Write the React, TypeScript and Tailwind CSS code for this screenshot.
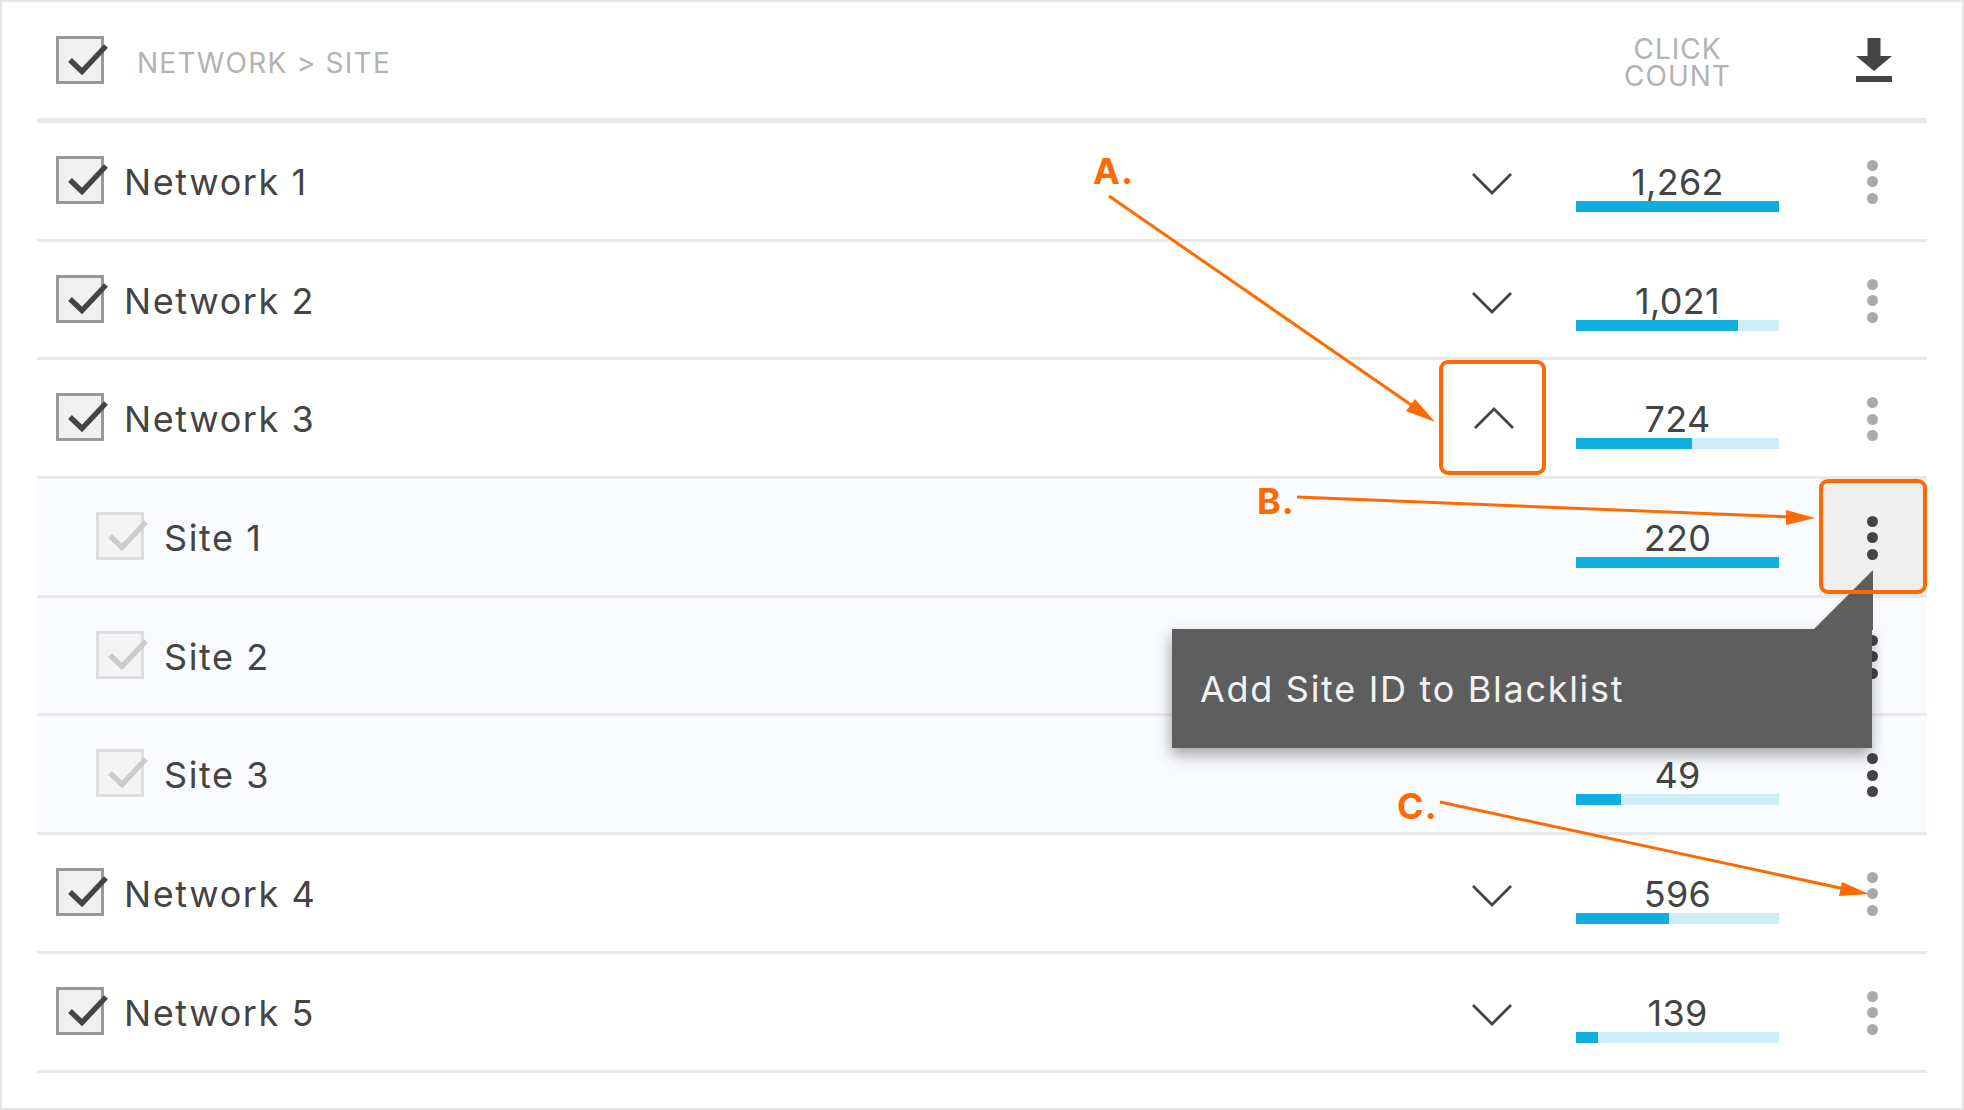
import React from 'react';

interface RowData {
  id: string;
  label: string;
  count: string | null;
  pct: number;
  site?: boolean;
  open?: boolean;
  active?: boolean;
}

const rows: RowData[] = [
  { id: 'n1', label: 'Network 1', count: '1,262', pct: 100 },
  { id: 'n2', label: 'Network 2', count: '1,021', pct: 80 },
  { id: 'n3', label: 'Network 3', count: '724', pct: 57, open: true },
  { id: 's1', label: 'Site 1', count: '220', pct: 100, site: true, active: true },
  { id: 's2', label: 'Site 2', count: null, pct: 40, site: true },
  { id: 's3', label: 'Site 3', count: '49', pct: 22, site: true },
  { id: 'n4', label: 'Network 4', count: '596', pct: 46 },
  { id: 'n5', label: 'Network 5', count: '139', pct: 11 },
];

function Checkbox({ muted = false }: { muted?: boolean }) {
  return (
    <div
      className={
        muted
          ? 'relative h-[48px] w-[48px] shrink-0 border-[3px] border-[#dedede] bg-[#f4f4f5]'
          : 'relative h-[48px] w-[48px] shrink-0 border-[3px] border-[#999999] bg-[#f0f0f0]'
      }
    >
      <svg className="absolute -left-[3px] -top-[3px] overflow-visible" width="48" height="48" viewBox="0 0 48 48" fill="none">
        <path d="M14 24 L26 35.5 L50 10" stroke={muted ? '#cccccc' : '#444444'} strokeWidth="5.4" />
      </svg>
    </div>
  );
}

function Chevron({ up = false }: { up?: boolean }) {
  return (
    <svg
      className={up ? 'ml-[4px]' : 'mt-[6px]'}
      width="40"
      height="22"
      viewBox="0 0 40 22"
      fill="none"
    >
      <path d={up ? 'M1 21 L20 2 L39 21' : 'M1 1 L20 20 L39 1'} stroke="#444444" strokeWidth="2.8" />
    </svg>
  );
}

function Dots({ dark = false }: { dark?: boolean }) {
  const dot = dark ? 'h-[11px] w-[11px] rounded-full bg-[#444444]' : 'h-[11px] w-[11px] rounded-full bg-[#aaaaaa]';
  return (
    <div className="flex flex-col gap-[5.5px] pt-[2px]">
      <div className={dot} />
      <div className={dot} />
      <div className={dot} />
    </div>
  );
}

function Row({ row }: { row: RowData }) {
  return (
    <div
      className={
        row.site
          ? 'flex h-[118.7px] items-center border-b-[3px] border-[#e9e9e9] bg-[#fafbff]'
          : 'flex h-[118.7px] items-center border-b-[3px] border-[#e9e9e9] bg-white'
      }
    >
      <div className={row.site ? 'mb-[2px] ml-[59px]' : 'mb-[2px] ml-[19px]'}>
        <Checkbox muted={row.site} />
      </div>
      <div className="ml-[20px] flex-1 pt-[2px] text-[36px] leading-none tracking-[1.6px] text-[#444444]">{row.label}</div>
      <div className="flex w-[106px] items-center justify-center">
        {!row.site && <Chevron up={row.open} />}
      </div>
      <div className="ml-[31px] flex h-full w-[203px] flex-col items-center pt-[41px]">
        <div className="h-[37px] text-[36px] leading-[36px] tracking-[0.3px] text-[#444444]">{row.count}</div>
        <div className="h-[11px] w-full bg-[#cdedf7]">
          <div className="h-full bg-[#10aede]" style={{ width: `${row.pct}%` }} />
        </div>
      </div>
      <div
        className={
          row.active
            ? 'ml-[40px] flex h-full w-[108px] items-center justify-center bg-[#efefef] pr-[1px]'
            : 'ml-[40px] flex h-full w-[108px] items-center justify-center pr-[1px]'
        }
      >
        <Dots dark={row.site} />
      </div>
    </div>
  );
}

function Annotations() {
  return (
    <svg className="pointer-events-none absolute left-0 top-0" width="1964" height="1110" viewBox="0 0 1964 1110" fill="none">
      {/* A */}
      <path d="M1109 196 L1420 411" stroke="#ff6a00" strokeWidth="3" />
      <path d="M1435 422 L1406 411 L1415 399 Z" fill="#ff6a00" />
      {/* B */}
      <path d="M1297 497 L1790 517" stroke="#ff6a00" strokeWidth="3" />
      <path d="M1815 518 L1786 525 L1786 510 Z" fill="#ff6a00" />
      {/* C */}
      <path d="M1440 802 L1845 889" stroke="#ff6a00" strokeWidth="3" />
      <path d="M1869 894 L1839 896 L1842 882 Z" fill="#ff6a00" />
    </svg>
  );
}

export default function App() {
  return (
    <div className="relative h-[1110px] w-[1964px] overflow-hidden bg-white font-[Inter,sans-serif]">
      <div className="h-full w-full border-2 border-[#e6e6e6] pl-[35px] pr-[35px]">
        {/* Header */}
        <div className="flex h-[121px] items-center border-b-[5px] border-[#e9e9e9]">
          <div className="ml-[19px]">
            <Checkbox />
          </div>
          <div className="ml-[33px] flex-1 pt-[6px] text-[28px] leading-none tracking-[1.25px] text-[#b3b3b3]">NETWORK &gt; SITE</div>
          <div className="w-[203px] pt-[5px] text-center text-[28px] leading-[27px] tracking-[1px] text-[#b3b3b3]">
            <div>CLICK</div>
            <div>COUNT</div>
          </div>
          <div className="ml-[40px] flex w-[108px] justify-center pr-[1px]">
            <svg className="ml-[3px]" width="36" height="44" viewBox="0 0 36 44" fill="#444444">
              <path d="M11.5 0 H24.5 V18 H36 L18 33 L0 18 H11.5 Z" />
              <rect x="0" y="38" width="36" height="6" />
            </svg>
          </div>
        </div>

        {rows.map((row) => (
          <Row key={row.id} row={row} />
        ))}
      </div>

      {/* Tooltip */}
      <div className="absolute left-[1172px] top-[629px] flex h-[119px] w-[700px] items-center bg-[#5e5e5e] pl-[28px] text-[36px] leading-none tracking-[1.7px] text-[#f2f2f2] shadow-[-1px_7px_14px_rgba(0,0,0,0.35)]">
        Add Site ID to Blacklist
      </div>
      <svg className="absolute left-[1813px] top-[570px]" width="60" height="60" viewBox="0 0 60 60" fill="#5e5e5e">
        <path d="M0 60 L60 0 V60 Z" />
      </svg>

      {/* Highlight boxes */}
      <div className="absolute left-[1439px] top-[360px] h-[115px] w-[107px] rounded-[9px] border-4 border-[#ff6a00]" />
      <div className="absolute left-[1819px] top-[479px] h-[115px] w-[108px] rounded-[9px] border-4 border-[#ff6a00]" />

      <Annotations />
      <span className="absolute left-[1093px] top-[152px] text-[36px] font-bold leading-[38px] tracking-[1px] text-[#ff6a00]">A.</span>
      <span className="absolute left-[1257px] top-[482px] text-[36px] font-bold leading-[38px] tracking-[1px] text-[#ff6a00]">B.</span>
      <span className="absolute left-[1397px] top-[787px] text-[36px] font-bold leading-[38px] tracking-[1px] text-[#ff6a00]">C.</span>
    </div>
  );
}
